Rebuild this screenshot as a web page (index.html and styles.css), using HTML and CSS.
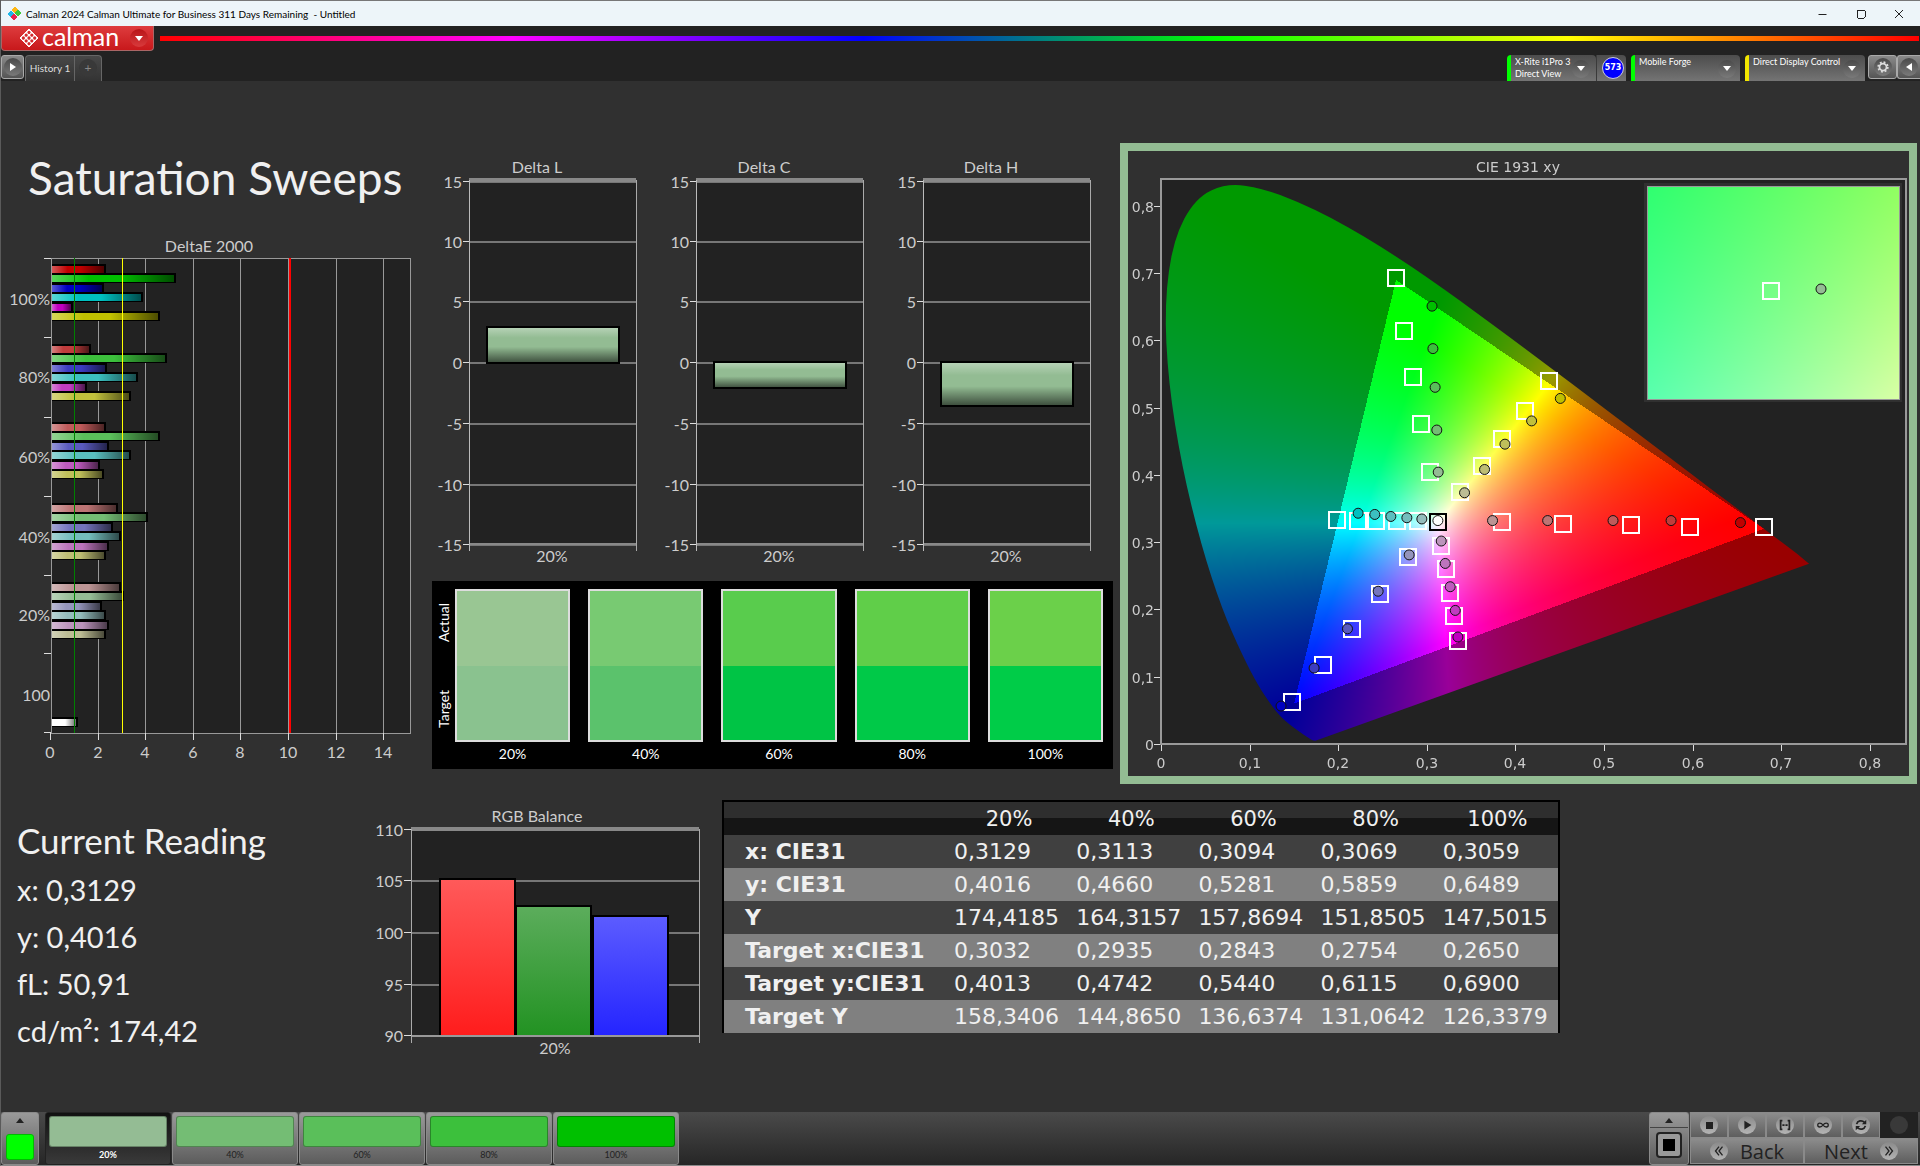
FILE: index.html
```html
<!DOCTYPE html>
<html lang="en">
<head>
<meta charset="utf-8">
<title>Calman 2024 Calman Ultimate for Business</title>
<link rel="stylesheet" href="styles.css">
</head>
<body>
<header class="titlebar">
  <svg class="app-icon" viewBox="0 0 14 14" aria-hidden="true">
    <rect x="5" y="0" width="5" height="5" transform="rotate(45 7 3)" fill="#fdb813"/>
    <rect x="1" y="4" width="5" height="5" transform="rotate(45 3 7)" fill="#1fb6e8"/>
    <rect x="8" y="4" width="5" height="5" transform="rotate(45 11 7)" fill="#3fc83a"/>
    <rect x="4" y="8" width="5" height="5" transform="rotate(45 7 11)" fill="#e6254f"/>
  </svg>
  <span class="window-title">Calman 2024 Calman Ultimate for Business 311 Days Remaining&nbsp; - Untitled</span>
  <div class="window-buttons">
    <button aria-label="Minimize"><svg viewBox="0 0 12 12"><path d="M1.500 6.500h8"/></svg></button>
    <button aria-label="Maximize"><svg viewBox="0 0 12 12"><rect x="2" y="2" width="8" height="8" rx="1"/></svg></button>
    <button aria-label="Close"><svg viewBox="0 0 12 12"><path d="M2 2l8 8M10 2l-8 8"/></svg></button>
  </div>
</header>

<div class="brandbar">
  <button class="brand">
    <svg class="brand-mark" viewBox="0 0 20 20" aria-hidden="true">
      <rect x="3" y="3" width="14" height="14" rx="2" transform="rotate(45 10 10)" fill="#fff"/>
      <g transform="rotate(45 10 10)" fill="#d42a2d">
        <circle cx="6" cy="6" r="1.600"/><circle cx="10" cy="6" r="1.600"/><circle cx="14" cy="6" r="1.600"/>
        <circle cx="6" cy="10" r="1.600"/><circle cx="10" cy="10" r="1.600"/><circle cx="14" cy="10" r="1.600"/>
        <circle cx="6" cy="14" r="1.600"/><circle cx="10" cy="14" r="1.600"/><circle cx="14" cy="14" r="1.600"/>
      </g>
    </svg>
    <span class="brand-name">calman</span>
    <span class="knob knob-red"><i class="tri-down"></i></span>
  </button>
  <div class="spectrum"></div>
</div>

<nav class="tabbar">
  <button class="square-button" aria-label="Expand"><span class="knob"><i class="tri-right"></i></span></button>
  <div class="tabs">
    <button class="tab">History 1</button>
    <button class="tab tab-add" aria-label="Add history"><span class="knob knob-dark">+</span></button>
  </div>
  <div class="devices">
    <button class="device meter ok"><span class="device-name">X-Rite i1Pro 3<br>Direct View</span><span class="knob"><i class="tri-down"></i></span></button>
    <span class="badge-cell"><span class="badge">573</span></span>
    <button class="device source ok"><span class="device-name">Mobile Forge</span><span class="knob"><i class="tri-down"></i></span></button>
    <button class="device display warn"><span class="device-name">Direct Display Control</span><span class="knob"><i class="tri-down"></i></span></button>
    <button class="square-button gear" aria-label="Settings"><span class="knob"><svg viewBox="0 0 16 16"><circle cx="8" cy="8" r="4" fill="none" stroke="#ddd" stroke-width="2"/><circle cx="8" cy="8" r="5.500" fill="none" stroke="#ddd" stroke-width="2" stroke-dasharray="2.160 2.160"/></svg></span></button>
    <button class="square-button collapse" aria-label="Collapse"><span class="knob"><i class="tri-left"></i></span></button>
  </div>
</nav>

<main>
  <section class="upper">
    <div class="sweeps">
      <h1>Saturation Sweeps</h1>
      <svg id="delta-e" viewBox="1 234 431 536" role="img" aria-label="DeltaE 2000"></svg>
    </div>
    <div class="middle">
      <div class="deltas">
        <svg id="delta-l" viewBox="432 152 227 422" role="img" aria-label="Delta L"></svg>
        <svg id="delta-c" viewBox="432 152 227 422" role="img" aria-label="Delta C"></svg>
        <svg id="delta-h" viewBox="432 152 227 422" role="img" aria-label="Delta H"></svg>
      </div>
      <div class="swatches">
        <div class="swatch-side"><span>Target</span><span>Actual</span></div>
        <div class="swatch"><div class="pair p20"></div>20%</div>
        <div class="swatch"><div class="pair p40"></div>40%</div>
        <div class="swatch"><div class="pair p60"></div>60%</div>
        <div class="swatch"><div class="pair p80"></div>80%</div>
        <div class="swatch"><div class="pair p100"></div>100%</div>
      </div>
    </div>
    <div class="cie">
      <svg id="cie" viewBox="1129 151 781 625" role="img" aria-label="CIE 1931 xy">
        <rect x="1162" y="179" width="745" height="565" fill="#222"/>
        <foreignObject x="1162" y="179" width="745" height="565"><canvas id="locus" width="745" height="565"></canvas></foreignObject>
        <rect x="1645" y="183" width="258" height="219" fill="#303030"/>
        <foreignObject x="1648" y="186" width="252" height="213"><canvas id="detail" width="252" height="213"></canvas></foreignObject>
      </svg>
    </div>
  </section>

  <section class="lower">
    <div class="reading">
      <h2>Current Reading</h2>
      <p>x: 0,3129</p>
      <p>y: 0,4016</p>
      <p>fL: 50,91</p>
      <p>cd/m²: 174,42</p>
    </div>
    <div class="balance"><svg id="rgb" viewBox="371 803 351 262" role="img" aria-label="RGB Balance"></svg></div>
    <table class="results">
      <thead><tr><th></th><th>20%</th><th>40%</th><th>60%</th><th>80%</th><th>100%</th></tr></thead>
      <tbody>
        <tr><th>x: CIE31</th><td>0,3129</td><td>0,3113</td><td>0,3094</td><td>0,3069</td><td>0,3059</td></tr>
        <tr><th>y: CIE31</th><td>0,4016</td><td>0,4660</td><td>0,5281</td><td>0,5859</td><td>0,6489</td></tr>
        <tr><th>Y</th><td>174,4185</td><td>164,3157</td><td>157,8694</td><td>151,8505</td><td>147,5015</td></tr>
        <tr><th>Target x:CIE31</th><td>0,3032</td><td>0,2935</td><td>0,2843</td><td>0,2754</td><td>0,2650</td></tr>
        <tr><th>Target y:CIE31</th><td>0,4013</td><td>0,4742</td><td>0,5440</td><td>0,6115</td><td>0,6900</td></tr>
        <tr><th>Target Y</th><td>158,3406</td><td>144,8650</td><td>136,6374</td><td>131,0642</td><td>126,3379</td></tr>
      </tbody>
    </table>
  </section>
</main>

<footer class="dock">
  <div class="picker">
    <button class="up" aria-label="Show patterns"><i class="tri-up"></i></button>
    <div class="current-color"></div>
  </div>
  <div class="levels">
    <button class="level selected"><span class="chip c20"></span>20%</button>
    <button class="level"><span class="chip c40"></span>40%</button>
    <button class="level"><span class="chip c60"></span>60%</button>
    <button class="level"><span class="chip c80"></span>80%</button>
    <button class="level"><span class="chip c100"></span>100%</button>
  </div>
  <div class="transport">
    <div class="pattern">
      <button class="up" aria-label="Show windows"><i class="tri-up"></i></button>
      <button class="window-size" aria-label="Window pattern"><span></span></button>
    </div>
    <div class="controls">
      <button aria-label="Stop"><span class="knob light"><svg viewBox="0 0 16 16"><rect x="4" y="4" width="8" height="8" fill="#222"/></svg></span></button>
      <button aria-label="Play"><span class="knob light"><svg viewBox="0 0 16 16"><path d="M5 3l8 5-8 5z" fill="#222"/></svg></span></button>
      <button aria-label="Read range"><span class="knob light"><svg viewBox="0 0 16 16"><path d="M5 3H3v10h2M11 3h2v10h-2M5 8h2M7.500 8h1M9 8h2" fill="none" stroke="#222" stroke-width="2"/></svg></span></button>
      <button aria-label="Continuous"><span class="knob light"><svg viewBox="0 0 16 16"><path d="M8 8C6 5 2 5 2 8s4 3 6 0 6-3 6 0-4 3-6 0z" fill="none" stroke="#222" stroke-width="1.500"/></svg></span></button>
      <button aria-label="Repeat"><span class="knob light"><svg viewBox="0 0 16 16"><path d="M3 7c1-4 6-5 9-2M13 9c-1 4-6 5-9 2" fill="none" stroke="#222" stroke-width="2"/><path d="M14 2v5H9zM2 14V9h5z" fill="#222"/></svg></span></button>
      <span class="idle"><span class="knob knob-dark"></span></span>
      <button class="step"><span class="knob light"><svg viewBox="0 0 16 16"><path d="M8 3L4 8l4 5M12 3L8 8l4 5" fill="none" stroke="#222" stroke-width="1.500"/></svg></span>Back</button>
      <button class="step next">Next<span class="knob light"><svg viewBox="0 0 16 16"><path d="M4 3l4 5-4 5M8 3l4 5-4 5" fill="none" stroke="#222" stroke-width="1.500"/></svg></span></button>
    </div>
  </div>
</footer>
<script src="charts.js"></script>
</body>
</html>
```
FILE: styles.css
```css
* { box-sizing: border-box; }
body {
  margin: 0;
  min-height: 100vh;
  display: flex;
  flex-direction: column;
  background: #303030;
  color: #f0f0f0;
  font-family: Lato, "Liberation Sans", sans-serif;
  border-left: 1px solid #5a5a5a;
  border-bottom: 1px solid #8a8a8a;
}
button {
  margin: 0;
  padding: 0;
  border: 0;
  background: none;
  color: inherit;
  font: inherit;
  display: flex;
  align-items: center;
}
svg { display: block; }
h1, h2, p { margin: 0; font-weight: 400; }

/* window title */
.titlebar {
  height: 26px;
  display: flex;
  align-items: center;
  background: #edf5f9;
  border-top: 1px solid #777;
  color: #1a1a1a;
}
.app-icon { width: 14px; height: 14px; margin-left: 6px; }
.window-title { margin-left: 5px; font-size: 10px; color: #000; }
.window-buttons { margin-left: auto; display: flex; padding-right: 2px; }
.window-buttons button { width: 38px; justify-content: center; }
.window-buttons svg { width: 12px; height: 12px; fill: none; stroke: #222; }

/* brand */
.brandbar { height: 26px; display: flex; background: #222; }
.brand {
  width: 153px;
  height: 25px;
  padding-left: 17px;
  background: linear-gradient(#de3c3e, #c8181b);
  border: 1px solid #a66;
  border-top: 0;
  border-radius: 0 0 4px 4px;
}
.brand-mark { width: 20px; height: 20px; }
.brand-name { width: 73px; margin-left: 3px; font-size: 25px; line-height: 20px; padding-bottom: 4px; color: #fff; }
.spectrum {
  flex: 1;
  height: 5px;
  margin: 10px 1px 0 6px;
  background: linear-gradient(90deg, #f00, #f0f, #00f, #0f0, #ff0, #f00);
}

.knob {
  width: 18px;
  height: 18px;
  border-radius: 50%;
  display: flex;
  align-items: center;
  justify-content: center;
  background: linear-gradient(#4a4a4a, #7a7a7a);
}
.knob svg { width: 14px; height: 14px; }
.knob-red { margin-left: 15px; background: linear-gradient(#b81518, #d83a3c); }
.knob-dark { background: #393939; color: #888; font-size: 12px; line-height: 16px; }
.light { background: linear-gradient(#8a8a8a, #b4b4b4); }
[class^="tri-"] { border: 4px solid transparent; }
.tri-down { border-top: 5px solid #fff; border-bottom: 0; }
.tri-up { border-bottom: 5px solid #222; border-top: 0; }
.tri-right { border-left: 6px solid #fff; border-right: 0; }
.tri-left { border-right: 6px solid #fff; border-left: 0; }

/* tab strip */
.tabbar { height: 29px; display: flex; align-items: flex-end; background: #222; }
.square-button {
  width: 23px;
  height: 24px;
  margin-bottom: 2px;
  justify-content: center;
  border: 1px solid #aaa;
  border-radius: 3px;
  background: linear-gradient(#8a8a8a, #555);
}
.tabs {
  display: flex;
  height: 26px;
  margin-left: 1px;
  border: 1px solid #666;
  border-bottom: 0;
  border-radius: 4px 4px 0 0;
  background: linear-gradient(#484848, #333);
}
.tab { width: 48px; padding-bottom: 1px; justify-content: center; font-size: 10px; color: #ddd; }
.tab-add { width: 27px; border-left: 1px solid #666; }
.devices { margin-left: auto; display: flex; align-items: flex-end; }
.device, .badge-cell { height: 26px; background: linear-gradient(#4c4c4c, #747474); }
.device {
  padding: 1px 4px 0;
  justify-content: space-between;
  text-align: left;
  font-size: 9px;
  line-height: 12px;
  border-left: 4px solid;
  border-radius: 4px 4px 0 0;
}
.device-name { align-self: flex-start; white-space: nowrap; color: #fff; }
.ok { border-left-color: #0f0; }
.warn { border-left-color: #f2e600; }
.meter { width: 89px; padding-right: 6px; }
.badge-cell {
  width: 30px;
  margin-right: 5px;
  padding-left: 3px;
  display: flex;
  align-items: center;
  justify-content: center;
  border-left: 1px solid #3a3a3a;
  border-radius: 0 4px 0 0;
}
.badge {
  width: 22px;
  height: 22px;
  border: 1px solid #ccd;
  border-radius: 50%;
  background: #00f;
  font: 700 8px/20px "DejaVu Sans", sans-serif;
  text-align: center;
  color: #fff;
}
.source { width: 109px; margin-right: 5px; }
.display { width: 120px; margin-right: 3px; }
.gear { width: 29px; }
.collapse { border-right: 0; border-radius: 3px 0 0 3px; }

/* charts */
main { flex: 1; padding: 62px 3px 0 0; }
.upper { display: grid; grid-template-columns: 431fr 688fr 797fr; align-items: start; }
.sweeps h1 { padding-left: 27px; font-size: 46px; line-height: 70px; margin-bottom: 21px; }
.middle { padding: 9px 7px 0 0; }
.deltas { display: grid; grid-template-columns: repeat(3, 1fr); }
svg text { font-size: 16px; fill: #ccc; }
svg > rect { shape-rendering: crispEdges; }
#cie text { font: 14px "DejaVu Sans", sans-serif; }
canvas { display: block; width: 100%; height: 100%; }
.cie { border: 8px solid #93bc93; }

.swatches {
  display: flex;
  gap: 18px;
  margin-top: 7px;
  padding: 8px 10px 0 0;
  height: 188px;
  background: #000;
  color: #fff;
  font-size: 14px;
  line-height: 24px;
  text-align: center;
}
.swatch-side {
  width: 23px;
  height: 153px;
  margin-right: -18px;
  padding: 14px 0;
  display: flex;
  justify-content: space-between;
  writing-mode: vertical-rl;
  transform: rotate(180deg);
}
.swatch { flex: 1; }
.pair { height: 153px; border: 2px solid #ddd; }
.p20 { background: linear-gradient(#99c693 50%, #8ac28f 50%); }
.p40 { background: linear-gradient(#78ca72 50%, #5bc26c 50%); }
.p60 { background: linear-gradient(#59cc4d 50%, #00c445 50%); }
.p80 { background: linear-gradient(#60ce49 50%, #00c948 50%); }
.p100 { background: linear-gradient(#6bd04a 50%, #00cc48 50%); }

/* readings */
.lower { display: grid; grid-template-columns: 370fr 351fr 838fr 357fr; align-items: start; }
.reading { padding: 31px 0 0 16px; }
.reading h2 { font-size: 35px; line-height: 50px; margin-bottom: 1px; }
.reading p { font-size: 29px; line-height: 47px; }
.balance { padding-top: 18px; }
.results {
  width: 100%;
  margin-top: 16px;
  border-collapse: collapse;
  table-layout: fixed;
  border: 2px solid #000;
  border-bottom: 0;
  font-family: "DejaVu Sans", sans-serif;
  font-size: 22px;
}
.results thead th { height: 34px; padding: 0; font-size: 21px; font-weight: 400; background: linear-gradient(#2e2e2e 50%, #151515 50%); }
.results thead th:first-child { width: 225px; }
.results tbody th { padding: 0 0 0 21px; text-align: left; line-height: 24px; white-space: nowrap; }
.results td { height: 33px; padding: 0 0 0 6px; line-height: 24px; }
.results tbody tr { background: #404040; }
.results tbody tr:nth-child(even) { background: #808080; }

/* dock */
.dock {
  height: 53px;
  display: flex;
  padding-right: 2px;
  background: linear-gradient(#4a4a4a, #262626);
  color: #222;
}
.picker, .pattern, .level, .controls button {
  background: linear-gradient(#9a9a9a, #5c5c5c);
  border: 1px solid #8a8a8a;
  border-radius: 3px;
}
.picker { width: 38px; margin: 0 6px 0 0; padding: 0 4px; }
.up { width: 100%; height: 15px; justify-content: center; }
.current-color { height: 26px; margin-top: 6px; background: #0f0; border: 1px solid #0b0; border-radius: 3px; }
.levels { display: flex; gap: 1px; }
.level {
  width: 126px;
  flex-direction: column;
  padding: 3px 3px 0;
  font-size: 9px;
  line-height: 16px;
}
.selected { background: linear-gradient(#111, #3a3a3a); border-color: #222; color: #fff; font-weight: 700; }
.chip { width: 100%; height: 31px; border: 1px solid rgba(0, 0, 0, .3); border-radius: 3px; }
.c20 { background: #94bc94; }
.c40 { background: #74bd74; }
.c60 { background: #5abf5a; }
.c80 { background: #3cc03c; }
.c100 { background: #00c000; }
.transport { margin-left: auto; display: flex; gap: 1px; }
.pattern { width: 40px; display: flex; flex-direction: column; align-items: center; }
.pattern .up { border-bottom: 1px solid #444; }
.window-size {
  width: 26px;
  height: 26px;
  margin-top: 4px;
  justify-content: center;
  border: 2px solid #222;
  border-radius: 4px;
  background: #999;
}
.window-size span { width: 12px; height: 12px; background: #000; }
.controls { display: grid; grid-template-columns: repeat(6, 38px); grid-template-rows: 26px 26px; }
.controls button { justify-content: center; border-radius: 0; background: linear-gradient(#8c8c8c, #5e5e5e); }
.controls .step { grid-column: span 3; gap: 12px; font: 20px "Open Sans", sans-serif; }
.idle { display: flex; align-items: center; justify-content: center; background: #222; }
```
FILE: charts.js
```js
const NS = 'http://www.w3.org/2000/svg';

function add(parent, name, attrs, text) {
  const el = document.createElementNS(NS, name);
  for (const key in attrs) el.setAttribute(key, attrs[key]);
  if (text !== undefined) el.textContent = text;
  parent.appendChild(el);
  return el;
}
const box = (p, x, y, w, h, fill, more) => add(p, 'rect', { x, y, width: w, height: h, fill, ...more });
const label = (p, x, y, anchor, text) => add(p, 'text', { x, y, 'text-anchor': anchor }, text);

function shade(svg, id, horizontal) {
  const g = add(add(svg, 'defs', {}), 'linearGradient', { id, x1: 0, y1: 0, x2: horizontal ? 1 : 0, y2: horizontal ? 0 : 1 });
  [[0, '#fff', 0.35], [0.3, '#fff', 0], [0.55, '#000', 0], [1, '#000', 0.6]].forEach(([offset, color, opacity]) =>
    add(g, 'stop', { offset, 'stop-color': color, 'stop-opacity': opacity }));
}

/* Saturation levels as [low channel, high channel] */
const LEVELS = { 20: [148, 188], 40: [116, 189], 60: [90, 191], 80: [60, 192], 100: [0, 192] };
const HUES = { r: [1, 0, 0], g: [0, 1, 0], b: [0, 0, 1], c: [0, 1, 1], m: [1, 0, 1], y: [1, 1, 0] };
const tint = (hue, level) => `rgb(${HUES[hue].map(on => LEVELS[level][on]).join()})`;

/* DeltaE 2000 */
(function () {
  const svg = document.getElementById('delta-e');
  shade(svg, 'shade-e', true);
  label(svg, 209, 252, 'middle', 'DeltaE 2000');
  box(svg, 51, 258, 359, 475, '#222');
  for (let v = 2; v <= 14; v += 2) box(svg, Math.round(50 + v * 23.8), 258, 1, 475, '#999');
  const groups = [
    [100, 269, [53, 123, 51, 90, 20, 107]],
    [80, 349, [38, 114, 54, 85, 34, 78]],
    [60, 427, [53, 107, 56, 78, 47, 51]],
    [40, 508, [65, 95, 60, 68, 56, 53]],
    [20, 587, [68, 71, 49, 53, 56, 53]]
  ];
  function bar(y, w, fill) {
    box(svg, 51, y - 5, w + 2, 10, '#000');
    box(svg, 52, y - 3, w - 1, 7, fill);
    box(svg, 52, y - 3, w - 1, 7, 'url(#shade-e)');
  }
  groups.forEach(([level, y, widths]) => widths.forEach((w, i) => bar(Math.round(y + i * 9.4), w, tint('rgbcmy'[i], level))));
  bar(722, 25, '#fff');
  box(svg, 51, 258, 359, 475, 'none', { stroke: '#999', 'stroke-width': 1 });
  box(svg, 74, 258, 1, 475, '#008000');
  box(svg, 122, 258, 1, 475, '#ff0');
  box(svg, 289, 258, 2, 475, '#f00');
  [258, 337, 417, 496, 575, 653, 732].forEach(y => box(svg, 44, y, 7, 1, '#ddd'));
  for (let v = 0; v <= 14; v += 2) {
    const x = Math.round(50 + v * 23.8);
    box(svg, x, 733, 1, 7, '#ddd');
    label(svg, x, 758, 'middle', v);
  }
  [['100%', 299], ['80%', 377], ['60%', 457], ['40%', 537], ['20%', 615], ['100', 695]].forEach(([t, y]) => label(svg, 50, y + 6, 'end', t));
})();

/* Delta L, C and H */
function deltaChart(id, title, from, to) {
  const svg = document.getElementById(id);
  shade(svg, 'shade-' + id, false);
  label(svg, 537, 173, 'middle', title);
  box(svg, 469, 180, 167, 364, '#222');
  [[15, 181], [10, 241], [5, 301], [0, 362], [-5, 423], [-10, 484], [-15, 544]].forEach(([v, y]) => {
    box(svg, 463, y, 6, 1, '#ddd');
    box(svg, 469, y, 167, 2, '#777');
    label(svg, 462, y + 7, 'end', v);
  });
  box(svg, 469, 178, 167, 4, '#888');
  box(svg, 469, 543, 167, 2, '#888');
  box(svg, 469, 180, 1, 371, '#bbb');
  box(svg, 636, 180, 1, 371, '#aaa');
  box(svg, 487, from, 132, to - from, '#93bc93');
  box(svg, 487, from, 132, to - from, `url(#shade-${id})`, { stroke: '#000', 'stroke-width': 2 });
  label(svg, 552, 562, 'middle', '20%');
}
deltaChart('delta-l', 'Delta L', 327, 363);
deltaChart('delta-c', 'Delta C', 362, 388);
deltaChart('delta-h', 'Delta H', 362, 406);

/* RGB balance */
(function () {
  const svg = document.getElementById('rgb');
  label(svg, 537, 823, 'middle', 'RGB Balance');
  box(svg, 411, 830, 288, 207, '#222');
  [[110, 830], [105, 881], [100, 933], [95, 985], [90, 1036]].forEach(([v, y]) => {
    box(svg, 404, y, 7, 1, '#ddd');
    box(svg, 411, y, 288, 2, '#777');
    label(svg, 403, y + 7, 'end', v);
  });
  box(svg, 411, 828, 288, 4, '#888');
  [['r', 440, 880, '#ff5a5a', '#ff1c1c'], ['g', 516, 907, '#5cad5c', '#229222'], ['b', 593, 917, '#5c5cff', '#2424ff']].forEach(([n, x, y, top, bottom]) => {
    const g = add(add(svg, 'defs', {}), 'linearGradient', { id: 'balance-' + n, x1: 0, y1: 0, x2: 0, y2: 1 });
    add(g, 'stop', { offset: 0, 'stop-color': top });
    add(g, 'stop', { offset: 1, 'stop-color': bottom });
    box(svg, x, y, 75, 1037 - y, `url(#balance-${n})`, { stroke: '#000', 'stroke-width': 2 });
  });
  box(svg, 411, 1036, 288, 2, '#999');
  box(svg, 411, 830, 1, 214, '#aaa');
  box(svg, 699, 830, 1, 214, '#aaa');
  label(svg, 555, 1055, 'middle', '20%');
})();

/* CIE 1931 xy: linear RGB over the locus, dimmed outside the P3 triangle */
const PRIMARIES = [[0.68, 0.32], [0.265, 0.69], [0.15, 0.06]];
const TO_RGB = [3.2406, -1.5372, -0.4986, -0.9689, 1.8758, 0.0415, 0.0557, -0.204, 1.057];
const times = (m, v) => [0, 3, 6].map(r => m[r] * v[0] + m[r + 1] * v[1] + m[r + 2] * v[2]);
const toXYZ = (x, y) => [x / y, 1, (1 - x - y) / y];
const inGamut = (x, y) => PRIMARIES.every(([ax, ay], i) => {
  const [bx, by] = PRIMARIES[(i + 1) % 3];
  return (bx - ax) * (y - ay) - (by - ay) * (x - ax) >= 0;
});

function paint(canvas, x0, x1, y0, y1) {
  const ctx = canvas.getContext('2d');
  const { width: w, height: h } = canvas;
  const image = ctx.createImageData(w, h);
  for (let j = 0; j < h; j++) {
    for (let i = 0; i < w; i++) {
      const x = x0 + (x1 - x0) * (i + 0.5) / w;
      const y = Math.max(y1 - (y1 - y0) * (j + 0.5) / h, 0.0001);
      const rgb = times(TO_RGB, toXYZ(x, y));
      const level = inGamut(x, y) ? 255 : 153;
      const top = Math.max(...rgb);
      const at = (j * w + i) * 4;
      rgb.forEach((v, k) => { image.data[at + k] = level * Math.max(v, 0) / top; });
      image.data[at + 3] = 255;
    }
  }
  ctx.putImageData(image, 0, 0);
  return ctx;
}

const LOCUS = [.1741, .005, .1714, .0051, .1689, .0069, .1644, .0109, .1566, .0177, .144, .0297, .1355, .0399, .1241, .0578, .1096, .0868, .0913, .1327, .0687, .2007, .0454, .295, .0235, .4127, .0082, .5384, .0039, .6548, .0139, .7502, .0389, .812, .0743, .8338, .1142, .8262, .1547, .8059, .1929, .7816, .2296, .7543, .2658, .7243, .3016, .6923, .3373, .6589, .3731, .6245, .4087, .5896, .4441, .5547, .4788, .5202, .5125, .4866, .5448, .4544, .5752, .4242, .6029, .3965, .627, .3725, .6482, .3514, .6658, .334, .6915, .3083, .7079, .292, .719, .2809, .7307, .268];

(function () {
  const ctx = paint(document.getElementById('locus'), 0, 0.84, 0, 0.84);
  const at = n => [LOCUS[2 * n] / 0.84 * 745, 565 - LOCUS[2 * n + 1] / 0.84 * 565];
  ctx.globalCompositeOperation = 'destination-in';
  ctx.beginPath();
  ctx.moveTo(...at(0));
  const last = LOCUS.length / 2 - 1;
  for (let n = 1; n < last; n++) {
    const [px, py] = at(n);
    const [qx, qy] = at(n + 1);
    ctx.quadraticCurveTo(px, py, (px + qx) / 2, (py + qy) / 2);
  }
  ctx.lineTo(...at(last));
  ctx.closePath();
  ctx.fill();
  paint(document.getElementById('detail'), 0.279, 0.3275, 0.374, 0.428);

  const svg = document.getElementById('cie');
  label(svg, 1519, 172, 'middle', 'CIE 1931 xy');
  box(svg, 1162, 179, 745, 565, 'none', { stroke: '#999', 'stroke-width': 2 });
  const px = x => 1162 + x * 886;
  const py = y => 744 - y * 673;
  for (let n = 0; n <= 8; n++) {
    const text = n ? '0,' + n : '0';
    box(svg, Math.round(px(n / 10)), 745, 1, 6, '#ddd');
    label(svg, Math.round(px(n / 10)), 768, 'middle', text);
    box(svg, 1155, Math.round(py(n / 10)), 6, 1, '#ddd');
    label(svg, 1155, Math.round(py(n / 10)) + 6, 'end', text);
  }
  box(svg, 1648, 186, 252, 213, 'none', { stroke: '#999', 'stroke-width': 1 });

  const square = (x, y, stroke) => box(svg, Math.round(x) - 8, Math.round(y) - 8, 16, 16, 'none', { stroke, 'stroke-width': 2 });
  const dot = (x, y, fill) => add(svg, 'circle', { cx: x, cy: y, r: 5, fill, stroke: '#111', 'stroke-width': 1 });
  const targets = [
    .265, .6925, .2745, .614, .2843, .546, .2935, .476, .3032, .4035,
    .1992, .3332, .2225, .332, .2432, .332, .2666, .332, .29, .332,
    .279, .278, .247, .2227, .2154, .1712, .183, .1177, .1483, .0619,
    .3163, .2944, .3215, .2598, .3264, .2246, .3306, .19, .3355, .153,
    .337, .3739, .3618, .4127, .3848, .4528, .4112, .4947, .4383, .539,
    .3848, .3296, .4541, .3271, .5301, .3247, .5971, .3229, .6807, .3229
  ];
  for (let n = 0; n < targets.length; n += 2) square(px(targets[n]), py(targets[n + 1]), '#fff');
  square(px(.3125), py(.3296), '#000');
  const measured = {
    g: [.3129, .404, .3113, .4665, .3094, .53, .3069, .5875, .3059, .6506],
    c: [.2944, .3344, .2775, .3362, .2594, .3381, .2413, .3411, .2225, .3429],
    m: [.3163, .3016, .3208, .2683, .3264, .2337, .3321, .1985, .3351, .159],
    b: [.2801, .281, .2451, .227, .2105, .1712, .1728, .1129, .1355, .0564],
    y: [.3426, .3733, .3652, .4079, .3882, .4455, .4183, .4801, .4507, .5135],
    r: [.3742, .332, .4364, .332, .5102, .332, .5757, .332, .654, .329]
  };
  for (const hue in measured) {
    [20, 40, 60, 80, 100].forEach((level, i) => dot(px(measured[hue][2 * i]), py(measured[hue][2 * i + 1]), tint(hue, level)));
  }
  dot(px(.3125), py(.332), '#fff');
  square(1772, 291, '#fff');
  dot(1822, 289, tint('g', 20));
})();
```
